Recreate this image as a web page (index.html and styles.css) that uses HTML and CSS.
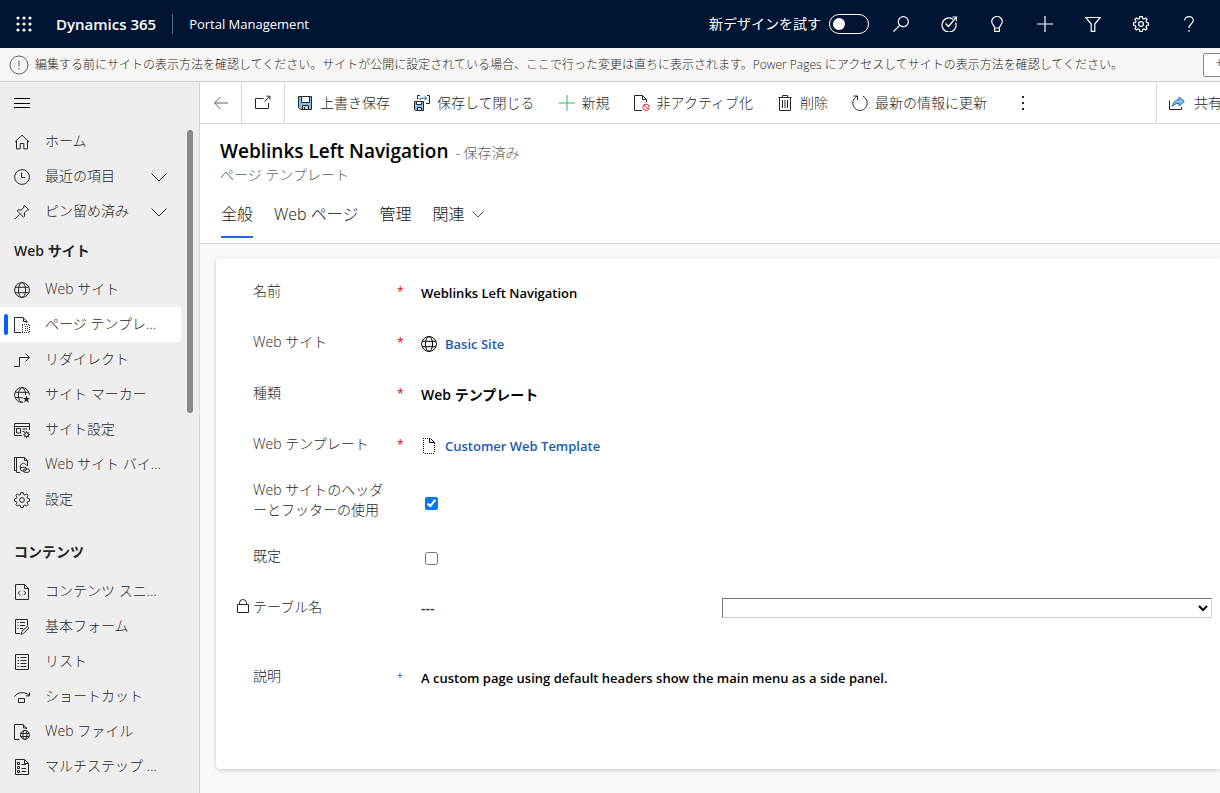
FILE: index.html
```html
<!DOCTYPE html>
<html lang="ja">
<head>
<meta charset="utf-8">
<title>Weblinks Left Navigation - Portal Management</title>
<link rel="stylesheet" href="styles.css">
</head>
<body>
<svg class="defs" aria-hidden="true">
  <symbol id="i-globe" viewBox="0 0 16 16"><circle cx="8" cy="8" r="7.4"/><ellipse cx="8" cy="8" rx="3.6" ry="7.4"/><path d="M1.3 5.3h13.4M1.3 10.7h13.4"/></symbol>
  <symbol id="i-gear" viewBox="0 0 16 16"><circle cx="8" cy="8" r="2.4"/><path d="M6.8 .6h2.4l.5 2 1.2.5 1.8-1.1 1.4 1.4-1.1 1.8.5 1.2 2 .5v2.3l-2 .5-.5 1.2 1.1 1.8-1.4 1.4-1.8-1.1-1.2.5-.5 2H6.8l-.5-2-1.2-.5-1.8 1.1-1.4-1.4L3 10.900l-.5-1.200-2-.5V6.900l2-.5L3 5.200 1.900 3.400 3.300 2l1.800 1.100 1.200-.5z"/></symbol>
  <symbol id="i-down" viewBox="0 0 16 16"><path d="M.5 4.500 8 12l7.500-7.500"/></symbol>
</svg>

<header class="topbar">
  <button class="waffle" aria-label="アプリ起動ツール"><svg viewBox="0 0 16 16"><g class="solid"><circle cx="2" cy="2" r="1.600"/><circle cx="8" cy="2" r="1.600"/><circle cx="14" cy="2" r="1.600"/><circle cx="2" cy="8" r="1.600"/><circle cx="8" cy="8" r="1.600"/><circle cx="14" cy="8" r="1.600"/><circle cx="2" cy="14" r="1.600"/><circle cx="8" cy="14" r="1.600"/><circle cx="14" cy="14" r="1.600"/></g></svg></button>
  <a class="brand" href="#">Dynamics 365</a>
  <a class="app-name" href="#">Portal Management</a>
  <label class="try-new" for="new-look">新デザインを試す <input id="new-look" class="toggle" type="checkbox" role="switch"></label>
  <div class="tools">
    <button aria-label="検索"><svg viewBox="0 0 16 16"><circle cx="10.300" cy="5.700" r="5"/><path d="M6.700 9.300.5 15.500"/></svg></button>
    <button aria-label="タスク"><svg viewBox="0 0 16 16"><path d="M12 3.200A7 7 0 1 0 14.600 6.500M4.500 7.500l3 3L15 1.500M11.500 1H15.500V5"/></svg></button>
    <button aria-label="ヒント"><svg viewBox="0 0 16 16"><path d="M5.600 12C5.600 9.500 2.700 8.500 2.700 5.600a5.300 5.100 0 0 1 10.600 0C13.300 8.500 10.400 9.500 10.400 12zM5.600 12v3.400h4.800V12"/></svg></button>
    <button aria-label="新規作成"><svg viewBox="0 0 16 16"><path d="M8 0v16M0 8h16"/></svg></button>
    <button aria-label="フィルター"><svg viewBox="0 0 16 16"><path d="M.7 1.500h14.600L9.800 8v7.300H6.200V8z"/></svg></button>
    <button aria-label="設定"><svg><use href="#i-gear"/></svg></button>
    <button aria-label="ヘルプ"><svg viewBox="0 0 16 16"><path d="M3.700 4.500C3.700 2 5.500.7 8 .7s4.300 1.400 4.300 3.800C12.300 7.700 8 7.900 8 12M8 14v1.700"/></svg></button>
  </div>
</header>

<div class="banner" role="status">
  <svg class="info" viewBox="0 0 20 20"><circle cx="10" cy="10" r="9"/><path d="M10 5.500v6M10 13v1.500"/></svg>
  <span>編集する前にサイトの表示方法を確認してください。サイトが公開に設定されている場合、ここで行った変更は直ちに表示されます。Power Pages にアクセスしてサイトの表示方法を確認してください。</span>
  <button class="banner-action">サイトを開く</button>
</div>

<div class="shell">
  <nav class="sidebar" aria-label="サイト マップ">
    <button class="menu" aria-label="メニュー"><svg viewBox="0 0 16 16"><path d="M0 3.500h16M0 8.500h16M0 12.500h16"/></svg></button>
    <a class="item" href="#"><svg viewBox="0 0 16 16"><path d="M.8 8 8 1.200 15.200 8M2.500 6.700v8.200h3.700V9.500h3.600v5.400h3.700V6.700"/></svg><span>ホーム</span></a>
    <a class="item" href="#"><svg viewBox="0 0 16 16"><circle cx="8" cy="8" r="7.400"/><path d="M7.500 3.500v5h3.700"/></svg><span>最近の項目</span><svg class="chev"><use href="#i-down"/></svg></a>
    <a class="item" href="#"><svg viewBox="0 0 16 16"><path d="M.8 15.200l4.800-4.800M10.200 1.200l4.600 4.600-1.700.4-2.700 2.700.1 3.300-1 1L3.200 6.900l1-1 3.200.1 2.500-2.900z"/></svg><span>ピン留め済み</span><svg class="chev"><use href="#i-down"/></svg></a>

    <h2 class="group">Web サイト</h2>
    <a class="item" href="#"><svg><use href="#i-globe"/></svg><span>Web サイト</span></a>
    <a class="item selected" href="#" aria-current="page"><svg viewBox="0 0 16 16"><path d="M7 15.500H.5V.5h8.500L13 4.500v1.500M9.500.5V4.500H13"/><path class="dots" d="M8 7.500h8M8 15.500h8M8.500 8v8M15.500 8v8M11 11.500h4M11 9.500h4M11 13.500h4"/></svg><span>ページ テンプレート</span></a>
    <a class="item" href="#"><svg viewBox="0 0 16 16"><path d="M0 14.500h5.500V5.500H15M11.500 1.500l4 4-4 4"/></svg><span>リダイレクト</span></a>
    <a class="item" href="#"><svg viewBox="0 0 16 16"><path d="M9 15.300A7.400 7.400 0 1 1 15.400 8M8.500 15.400C3.100 15.500 3.100 2 8 .6c2.600.5 3.600 4 3.600 7.400M1.300 5.300h13.400M1.300 10.700h7.500"/><path class="solid" d="M12.500 8.500l1 2.600h2.500l-2 1.700.8 2.700-2.300-1.600-2.300 1.600.8-2.700-2-1.700h2.500z"/></svg><span>サイト マーカー</span></a>
    <a class="item" href="#"><svg viewBox="0 0 16 16"><path d="M8 13.500H.5V1.500h15V8M.5 4.500h15M2.500 6.500h4v4.500h-4zM8.500 7h4.500M8.500 9.500h2"/><circle cx="12.600" cy="12.600" r="2"/><path d="M12.600 9.200v1.400M12.600 14.600V16M9.200 12.600h1.400M14.600 12.600H16M10.200 10.200l1 1M14 14l1 1M15 10.200l-1 1M11.200 14l-1 1"/></svg><span>サイト設定</span></a>
    <a class="item" href="#"><svg viewBox="0 0 16 16"><path d="M2.500.5h-2v13h2M6 15.500H2.500V.5h8l3 3V9M10.500.5v3h3"/><rect x="6.500" y="10.300" width="6" height="3.600" rx="1.800"/><rect x="9.500" y="11.800" width="6" height="3.600" rx="1.800"/><path d="M6.500 12c-2-5 3.500-8 6-3.500"/></svg><span>Web サイト バインド</span></a>
    <a class="item" href="#"><svg><use href="#i-gear"/></svg><span>設定</span></a>

    <h2 class="group later">コンテンツ</h2>
    <a class="item" href="#"><svg viewBox="0 0 16 16"><path d="M1.500.5h9l4 4v11h-13zM10.500.5v4h4M6.300 6.800 4.200 9l2.100 2.200M9.700 6.800 11.800 9l-2.100 2.200"/></svg><span>コンテンツ スニペット</span></a>
    <a class="item" href="#"><svg viewBox="0 0 16 16"><path d="M6 14.500H1.500V.5h12v6M3.500 3.500h1M6 3.500h5M3.500 6.500h1M6 6.500h5M3.500 9.500h1M6 9.500h3M7 15.300l.8-2.700 5.500-5.300 1.600 1.600-5.400 5.500z"/></svg><span>基本フォーム</span></a>
    <a class="item" href="#"><svg viewBox="0 0 16 16"><path d="M1.500.5h13v15h-13zM3.500 3.500h1.500M6.500 3.500h6M3.500 6.500h1.500M6.500 6.500h6M3.500 9.500h1.500M6.500 9.500h6M3.500 12.500h1.500M6.500 12.500h6"/></svg><span>リスト</span></a>
    <a class="item" href="#"><svg viewBox="0 0 16 16"><path d="M.5 7.500C3.500 2.500 12 2.500 15.200 6.500M15.500 3.500v3.400h-3.600M4.500 9.500h6v4h-6z"/></svg><span>ショートカット</span></a>
    <a class="item" href="#"><svg viewBox="0 0 16 16"><path d="M5.500 15.500h-5V.5h8.500L12.500 4v1.200M9.500.5V4h3"/><circle cx="10.900" cy="10.900" r="4.500"/><ellipse cx="10.900" cy="10.900" rx="2" ry="4.500"/><path d="M6.700 9.500h8.400M6.700 12.500h8.400"/></svg><span>Web ファイル</span></a>
    <a class="item" href="#"><svg viewBox="0 0 16 16"><path d="M1.500.5h9l4 4v11h-13zM10.500.5v4h4M3.500 3.500h2v2h-2zM3.500 7.500h2v2h-2zM3.500 11.500h2v2h-2zM7.500 5.500h4.500M7.500 9.500h4.500M7.500 12.500h4.500"/></svg><span>マルチステップ フォーム</span></a>
    <div class="scroll-thumb"></div>
  </nav>

  <main class="main">
    <div class="commands" role="toolbar" aria-label="コマンド">
      <button class="square back" aria-label="戻る"><svg viewBox="0 0 16 16"><path d="M15 8H1.500M7.500 2 1.500 8l6 6"/></svg></button>
      <button class="square" aria-label="新しいウィンドウ"><svg viewBox="0 0 16 16"><path d="M8.500 3.500h-8v10h13V8M9.500 6.500 15 1.300M11.500 1.200H15V4.700"/></svg></button>
      <div class="command-list">
        <button><svg viewBox="0 0 16 16"><path class="blue-fill" d="M1.500 1.500h13v13h-11l-2-2z"/><path class="white-fill" d="M4.500 1.500h8v6h-8z"/><path class="grey-fill" d="M5.500 10.500h6v4h-6z"/><path d="M7.500 12v2"/></svg>上書き保存</button>
        <button><svg viewBox="0 0 16 16"><path class="blue-fill" d="M.5 6.500h9v9h-8l-1-1z"/><path class="white-fill" d="M2.500 6.500h5v3h-5z"/><path class="grey-fill" d="M3.500 12.500h4v3h-4z"/><path d="M3.500 4V.5H6M13 .5h2.500v8H12"/><path class="blue-line" d="M6 5V3.200h6.500M10.500 1l2.300 2.200-2.300 2.200"/></svg>保存して閉じる</button>
        <button><svg class="green" viewBox="0 0 16 16"><path d="M8 0v16M0 8h16"/></svg>新規</button>
        <button><svg viewBox="0 0 16 16"><path d="M8 15.500H.5V.5h8L12.500 4.500V7M8.500.5v4h4"/><g class="red"><circle cx="12" cy="12.300" r="3.200"/><path d="M9.800 10l4.500 4.500"/></g></svg>非アクティブ化</button>
        <button><svg viewBox="0 0 16 16"><path d="M1.500 2.500h13M2.500 2.500v13h11v-13M5.500 2.500v-2h5v2M5.500 5v8M8 5v8M10.500 5v8"/></svg>削除</button>
        <button><svg viewBox="0 0 16 16"><path d="M5 1.300C-2 5 .5 15.400 8 15.400S18 5 11 1.300M1.500 1h4v4"/></svg>最新の情報に更新</button>
        <button class="more" aria-label="その他のコマンド"><svg viewBox="0 0 16 16"><path class="solid" d="M7 1h2v2H7zM7 7h2v2H7zM7 13h2v2H7z"/></svg></button>
      </div>
      <button class="share"><svg viewBox="0 0 16 16"><path d="M.5 5.500v9h12V12"/><path class="blue-shape" d="M10 2l5.300 4.500L10 11V8.500C7 8 5 9.500 3.500 11.500 4 7.500 6 4.800 10 4.500z"/></svg>共有</button>
    </div>

    <section class="record">
      <div class="title-row"><h1>Weblinks Left Navigation</h1><span class="muted">- 保存済み</span></div>
      <p class="muted entity">ページ テンプレート</p>
      <div class="tabs" role="tablist">
        <button role="tab" aria-selected="true" class="active">全般</button>
        <button role="tab">Web ページ</button>
        <button role="tab">管理</button>
        <button role="tab">関連<svg><use href="#i-down"/></svg></button>
      </div>
    </section>

    <form class="card">
      <div class="row"><span class="label">名前</span><span class="req">*</span><div class="value">Weblinks Left Navigation</div></div>
      <div class="row"><span class="label">Web サイト</span><span class="req">*</span><div class="value"><svg><use href="#i-globe"/></svg><a href="#">Basic Site</a></div></div>
      <div class="row"><span class="label">種類</span><span class="req">*</span><div class="value mixed">Web テンプレート</div></div>
      <div class="row"><span class="label">Web テンプレート</span><span class="req">*</span><div class="value"><svg viewBox="0 0 16 16"><path class="dots" d="M2 .5h7M2.500 2v14M4 15.500h10M13.500 5v10"/><path d="M8.500.5v4h5L9.500.5"/></svg><a href="#">Customer Web Template</a></div></div>
      <div class="row tall"><label class="label" for="use-header">Web サイトのヘッダーとフッターの使用</label><div class="value"><input id="use-header" type="checkbox" checked></div></div>
      <div class="row"><label class="label" for="is-default">既定</label><div class="value"><input id="is-default" type="checkbox"></div></div>
      <div class="row"><svg class="lock" viewBox="0 0 14 14"><path d="M1.500 5.500h11v8h-11zM3.500 5.500V4a3.500 3.500 0 0 1 7 0v1.500"/></svg><label class="label" for="table-name">テーブル名</label><div class="value mixed split"><span>---</span><select id="table-name"><option></option></select></div></div>
      <div class="row last"><span class="label">説明</span><span class="req optional">+</span><div class="value">A custom page using default headers show the main menu as a side panel.</div></div>
    </form>
  </main>
</div>
</body>
</html>
```
FILE: styles.css
```css
* { box-sizing: border-box; }

body {
  margin: 0;
  min-height: 100vh;
  display: flex;
  flex-direction: column;
  overflow-x: hidden;
  font: 14px/20px "Open Sans", "Noto Sans CJK JP", sans-serif;
  font-weight: 300;
  color: #262626;
  background: #faf9f8;
}

button {
  font: inherit;
  color: inherit;
  background: none;
  border: 0;
  padding: 0;
  white-space: nowrap;
}

a { color: inherit; text-decoration: none; }
h1, h2, p { margin: 0; }

svg {
  width: 16px;
  height: 16px;
  flex: none;
  display: block;
  fill: none;
  stroke: currentColor;
  stroke-width: 1;
}

.defs { display: none; }
.solid { fill: currentColor; stroke: none; }
.dots { stroke-dasharray: 1 1; shape-rendering: crispEdges; }

/* Top bar */
.topbar {
  display: flex;
  align-items: center;
  height: 48px;
  padding-right: 7px;
  background: #001433;
  color: #fff;
}
.waffle { width: 48px; height: 48px; display: grid; place-items: center; }
.brand {
  padding: 0 16px 0 8px;
  font-size: 15px;
  font-weight: 600;
}
.app-name {
  padding-left: 16px;
  border-left: 1px solid #5a6b84;
  font-size: 13px;
  font-weight: 400;
}
.try-new {
  margin-left: auto;
  display: flex;
  align-items: center;
  gap: 8px;
  padding-right: 8px;
  font-weight: 400;
}
.toggle {
  appearance: none;
  width: 40px;
  height: 20px;
  margin: 0;
  padding: 3px;
  border: 1px solid #fff;
  border-radius: 10px;
}
.toggle::before {
  content: "";
  display: block;
  width: 12px;
  height: 12px;
  border-radius: 50%;
  background: #fff;
}
.tools { display: flex; }
.tools button { width: 48px; height: 48px; display: grid; place-items: center; }
.tools svg { stroke-width: 1.2; }

/* Notice */
.banner {
  display: flex;
  align-items: center;
  gap: 6px;
  height: 34px;
  padding: 0 0 0 9px;
  overflow: hidden;
  border-bottom: 1px solid #d2d0ce;
  background: #f8f6f4;
  font-size: 12px;
  white-space: nowrap;
}
.info { width: 20px; height: 20px; color: #605e5c; }
.banner-action {
  margin: 0 -80px 0 auto;
  width: 97px;
  height: 24px;
  border: 1px solid #8a8886;
  border-radius: 2px;
  background: #fff;
}

.shell { flex: 1; display: flex; }

/* Site map */
.sidebar {
  position: relative;
  flex: none;
  width: 200px;
  border-right: 1px solid #d6d6d6;
  background: #eee;
}
.menu { display: flex; align-items: center; height: 42px; padding: 0 14px; color: #000; }
.item {
  display: flex;
  align-items: center;
  gap: 15px;
  height: 35px;
  width: 181px;
  padding: 0 14px;
}
.item span {
  flex: 1;
  max-width: 117px;
  padding-bottom: 2px;
  overflow: hidden;
  text-overflow: ellipsis;
  white-space: nowrap;
}
.item .chev { margin-left: -10px; }
.item.selected { background: #fff; position: relative; }
.item.selected::before {
  content: "";
  position: absolute;
  left: 4px;
  top: 7px;
  width: 4px;
  height: 21px;
  border-radius: 2px;
  background: #0b5cff;
}
.group {
  padding: 12px 14px 11px;
  font-size: 14px;
  line-height: 20px;
  font-weight: 600;
}
.group.later { margin-top: 13px; padding-bottom: 12px; }
.scroll-thumb {
  position: absolute;
  top: 48px;
  right: 6px;
  width: 6px;
  height: 283px;
  border-radius: 3px;
  background: #888;
}

/* Commands */
.main { flex: 1; min-width: 0; overflow: hidden; }
.commands {
  display: flex;
  height: 42px;
  border-bottom: 1px solid #d6d6d6;
  background: #fff;
}
.square { width: 43px; display: grid; place-items: center; border-right: 1px solid #d6d6d6; }
.square.back { width: 42px; color: #605e5c; }
.command-list { flex: 1; display: flex; }
.command-list button { display: flex; align-items: center; gap: 7px; padding: 0 12px; }
.command-list .more { padding: 0 16px; }
.share {
  width: 64px;
  display: flex;
  align-items: center;
  gap: 9px;
  padding-left: 12px;
  border-left: 1px solid #d6d6d6;
}
.blue-fill { fill: #83beec; }
.white-fill { fill: #fff; }
.grey-fill { fill: #ccc; }
.blue-line { stroke: #106ebe; }
.blue-shape { fill: #83beec; stroke: #106ebe; }
.green { color: #3bb56c; }
.red { color: #e0303a; stroke: #e0303a; }

/* Record header */
.record { padding: 13px 20px 0; border-bottom: 1px solid #d6d6d6; background: #fff; }
.title-row { display: flex; align-items: baseline; gap: 7px; }
h1 { font-size: 19px; line-height: 28px; font-weight: 600; color: #000; }
.muted { color: #605e5c; }
.tabs { display: flex; gap: 21px; margin: 17px 0 0 1px; padding-bottom: 5px; font-size: 16px; color: #111; }
.tabs button { display: flex; align-items: center; gap: 8px; height: 36px; padding-bottom: 10px; border-bottom: 2px solid transparent; }
.tabs .active { border-color: #2266e3; }
.tabs svg { width: 12px; height: 12px; }

/* Form */
.card {
  margin: 14px 0 24px 16px;
  padding: 8px 8px 67px 20px;
  border-radius: 4px 0 0 4px;
  background: #fff;
  box-shadow: 0 1px 4px rgba(0, 0, 0, .2);
}
.row {
  display: grid;
  grid-template-columns: 17px 132px 36px minmax(0, 1fr);
  align-items: center;
  min-height: 51px;
}
.row.tall { min-height: 61px; }
.row.last { margin-top: 18px; }
.lock { width: 14px; height: 14px; margin-bottom: 4px; }
.label { grid-column: 2; padding-bottom: 2px; }
.req { grid-column: 3; padding-left: 12px; font-size: 12px; font-weight: 400; color: #e00; }
.req.optional { padding-bottom: 4px; color: #00c; font-size: 10px; }
.value {
  grid-column: 4;
  display: flex;
  align-items: center;
  gap: 8px;
  padding-top: 3px;
  font-size: 13px;
  font-weight: 600;
  color: #000;
}
.value.mixed { font-size: 14px; }
.value a { color: #1b5ab5; }
.value input { width: 13px; height: 13px; margin: 0 4px; }
.tall .value { padding-top: 5px; }
.value.split { display: grid; grid-template-columns: 301px minmax(0, 1fr); gap: 0; padding-top: 1px; }
.split span { color: #333; }
select {
  width: 100%;
  height: 20px;
  border: 1px solid #767676;
  border-right-color: #ccc;
  border-bottom-color: #ccc;
  border-radius: 0;
  background: #fff;
}
```
